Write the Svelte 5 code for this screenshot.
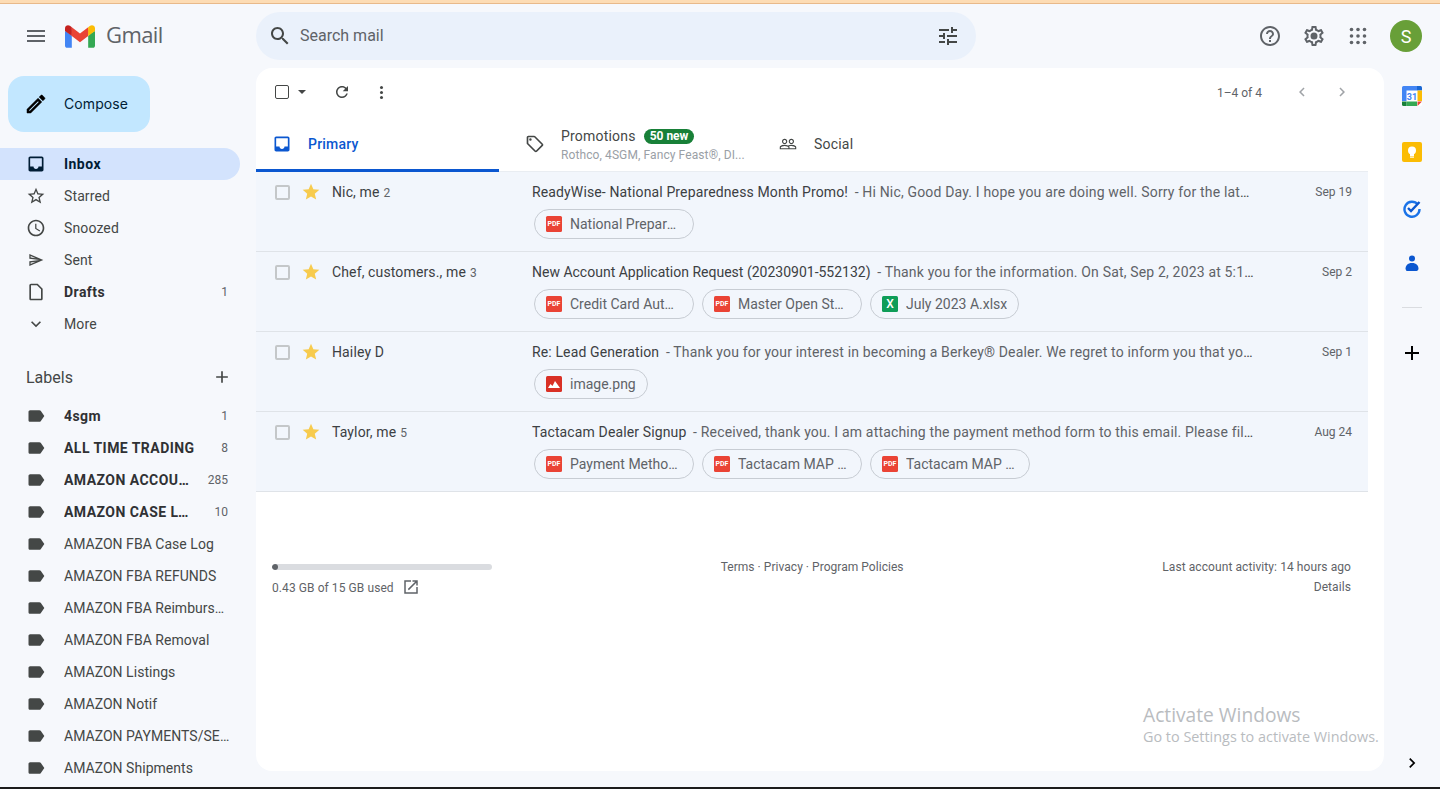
<script>
  // Gmail inbox. Icons are material paths, keyed by name.
  const icons = {
    menu: 'M3 18h18v-2H3v2zm0-5h18v-2H3v2zm0-7v2h18V6H3z',
    search: 'M15.5 14h-.79l-.28-.27C15.41 12.59 16 11.11 16 9.5 16 5.91 13.09 3 9.5 3S3 5.91 3 9.5 5.91 16 9.5 16c1.61 0 3.09-.59 4.23-1.57l.27.28v.79l5 4.99L20.49 19l-4.99-5zm-6 0C7.01 14 5 11.99 5 9.5S7.01 5 9.5 5 14 7.01 14 9.5 11.99 14 9.5 14z',
    tune: 'M3 17v2h6v-2H3zM3 5v2h10V5H3zm10 16v-2h8v-2h-8v-2h-2v6h2zM7 9v2H3v2h4v2h2V9H7zm14 4v-2H11v2h10zm-6-4h2V7h4V5h-4V3h-2v6z',
    help: 'M11 18h2v-2h-2v2zm1-16C6.48 2 2 6.48 2 12s4.48 10 10 10 10-4.48 10-10S17.52 2 12 2zm0 18c-4.41 0-8-3.59-8-8s3.59-8 8-8 8 3.59 8 8-3.59 8-8 8zm0-14c-2.21 0-4 1.79-4 4h2c0-1.1.9-2 2-2s2 .9 2 2c0 2-3 1.75-3 5h2c0-2.25 3-2.5 3-5 0-2.21-1.79-4-4-4z',
    gear: 'M19.43 12.98c.04-.32.07-.64.07-.98 0-.34-.03-.66-.07-.98l2.11-1.65c.19-.15.24-.42.12-.64l-2-3.46c-.09-.16-.26-.25-.44-.25-.06 0-.12.01-.17.03l-2.49 1c-.52-.4-1.08-.73-1.69-.98l-.38-2.65C14.46 2.18 14.25 2 14 2h-4c-.25 0-.46.18-.49.42l-.38 2.65c-.61.25-1.17.59-1.69.98l-2.49-1c-.06-.02-.12-.03-.18-.03-.17 0-.34.09-.43.25l-2 3.46c-.13.22-.07.49.12.64l2.11 1.65c-.04.32-.07.65-.07.98 0 .33.03.66.07.98l-2.11 1.65c-.19.15-.24.42-.12.64l2 3.46c.09.16.26.25.44.25.06 0 .12-.01.17-.03l2.49-1c.52.4 1.08.73 1.69.98l.38 2.65c.03.24.24.42.49.42h4c.25 0 .46-.18.49-.42l.38-2.65c.61-.25 1.17-.59 1.69-.98l2.49 1c.06.02.12.03.18.03.17 0 .34-.09.43-.25l2-3.46c.12-.22.07-.49-.12-.64l-2.11-1.65zm-1.98-1.71c.04.31.05.52.05.73 0 .21-.02.43-.05.73l-.14 1.13.89.7 1.08.84-.7 1.21-1.27-.51-1.04-.42-.9.68c-.43.32-.84.56-1.25.73l-1.06.43-.16 1.13-.2 1.35h-1.4l-.19-1.35-.16-1.13-1.06-.43c-.43-.18-.83-.41-1.23-.71l-.91-.7-1.06.43-1.27.51-.7-1.21 1.08-.84.89-.7-.14-1.13c-.03-.31-.05-.54-.05-.74s.02-.43.05-.73l.14-1.13-.89-.7-1.08-.84.7-1.21 1.27.51 1.04.42.9-.68c.43-.32.84-.56 1.25-.73l1.06-.43.16-1.13.2-1.35h1.39l.19 1.35.16 1.13 1.06.43c.43.18.83.41 1.23.71l.91.7 1.06-.43 1.27-.51.7 1.21-1.07.85-.89.7.14 1.13zM12 8.500a3.500 3.500 0 1 0 0 7 3.500 3.500 0 0 0 0-7z',
    edit: 'M14.06 9.02l.92.92L5.92 19H5v-.92l9.06-9.06M17.66 3c-.25 0-.51.1-.7.29l-1.83 1.83 3.75 3.75 1.83-1.83c.39-.39.39-1.02 0-1.41l-2.34-2.34c-.2-.2-.45-.29-.71-.29zm-3.6 3.19L3 17.25V21h3.75L17.81 9.94l-3.75-3.75z',
    inbox: 'M19 3H4.99c-1.11 0-1.98.89-1.98 2L3 19c0 1.1.88 2 1.99 2H19c1.1 0 2-.9 2-2V5c0-1.11-.9-2-2-2zm0 12h-4c0 1.66-1.35 3-3 3s-3-1.34-3-3H4.99V5H19v10z',
    star: 'M22 9.24l-7.19-.62L12 2 9.19 8.63 2 9.24l5.46 4.73L5.82 21 12 17.27 18.18 21l-1.63-7.03L22 9.24zM12 15.4l-3.76 2.27 1-4.28-3.32-2.88 4.38-.38L12 6.1l1.71 4.04 4.38.38-3.32 2.88 1 4.28L12 15.4z',
    starFill: 'M12 17.27L18.18 21l-1.64-7.03L22 9.24l-7.19-.61L12 2 9.19 8.63 2 9.24l5.46 4.73L5.82 21z',
    clock: 'M11.99 2C6.47 2 2 6.48 2 12s4.47 10 9.99 10C17.52 22 22 17.52 22 12S17.52 2 11.99 2zM12 20c-4.42 0-8-3.58-8-8s3.58-8 8-8 8 3.58 8 8-3.58 8-8 8zm.5-13H11v6l5.25 3.15.75-1.23-4.5-2.67z',
    send: 'M4.01 6.03l7.51 3.22-7.52-1 .01-2.22m7.5 8.72L4 17.97v-2.22l7.51-1M2.01 3L2 10l15 2-15 2 .01 7L23 12 2.01 3z',
    draft: 'M14 2H6c-1.1 0-2 .9-2 2v16c0 1.1.9 2 2 2h12c1.1 0 2-.9 2-2V8l-6-6zM6 20V4h7.17L18 8.83V20H6z',
    down: 'M7.41 8.59L12 13.17l4.59-4.58L18 10l-6 6-6-6z',
    label: 'M17.63 5.84C17.27 5.33 16.67 5 16 5L5 5.01C3.9 5.01 3 5.9 3 7v10c0 1.1.9 1.99 2 1.99L16 19c.67 0 1.27-.33 1.63-.84L22 12l-4.37-6.16z',
    plus: 'M19 13h-6v6h-2v-6H5v-2h6V5h2v6h6v2z',
    refresh: 'M17.65 6.35C16.2 4.9 14.21 4 12 4c-4.42 0-7.99 3.58-7.99 8s3.57 8 7.99 8c3.73 0 6.84-2.55 7.73-6h-2.08c-.82 2.33-3.04 4-5.65 4-3.31 0-6-2.69-6-6s2.69-6 6-6c1.66 0 3.14.69 4.22 1.78L13 11h7V4l-2.35 2.35z',
    tag: 'M21.41 11.58l-9-9C12.05 2.22 11.55 2 11 2H4c-1.1 0-2 .9-2 2v7c0 .55.22 1.05.59 1.42l9 9c.36.36.86.58 1.41.58s1.05-.22 1.41-.59l7-7c.37-.36.59-.86.59-1.41s-.23-1.06-.59-1.42zM13 20.01L4 11V4h7v-.01l9 9-7 7.02zM6.500 5a1.500 1.500 0 1 0 0 3 1.500 1.500 0 0 0 0-3z',
    people: 'M16.5 13c-1.2 0-3.07.34-4.5 1-1.43-.67-3.3-1-4.5-1C5.33 13 1 14.08 1 16.25V19h22v-2.75c0-2.17-4.33-3.25-6.5-3.25zm-4 4.5h-10v-1.25c0-.54 2.56-1.75 5-1.75s5 1.21 5 1.75v1.25zm9 0H14v-1.25c0-.46-.2-.86-.52-1.22.88-.3 1.96-.53 3.02-.53 2.44 0 5 1.21 5 1.75v1.25zM7.5 12c1.93 0 3.5-1.57 3.5-3.5S9.43 5 7.5 5 4 6.57 4 8.5 5.57 12 7.5 12zm0-5.5c1.1 0 2 .9 2 2s-.9 2-2 2-2-.9-2-2 .9-2 2-2zm9 5.5c1.93 0 3.5-1.57 3.5-3.5S18.43 5 16.5 5 13 6.57 13 8.5s1.57 3.5 3.5 3.5zm0-5.5c1.1 0 2 .9 2 2s-.9 2-2 2-2-.9-2-2 .9-2 2-2z',
    left: 'M15.41 7.41L14 6l-6 6 6 6 1.41-1.41L10.83 12z',
    right: 'M10 6L8.59 7.41 13.17 12l-4.58 4.59L10 18l6-6z',
    open: 'M19 19H5V5h7V3H3v18h18v-9h-2v7zM14 3v2h3.59l-9.83 9.83 1.41 1.41L19 6.41V10h2V3h-7z',
  };

  const nav = [
    { icon: 'inbox', name: 'Inbox', active: true },
    { icon: 'star', name: 'Starred' },
    { icon: 'clock', name: 'Snoozed' },
    { icon: 'send', name: 'Sent', size: 16 },
    { icon: 'draft', name: 'Drafts', bold: true, count: '1' },
    { icon: 'down', name: 'More' },
  ];

  const labels = [
    { name: '4sgm', bold: true, count: '1' },
    { name: 'ALL TIME TRADING', bold: true, count: '8' },
    { name: 'AMAZON ACCOUNT HEALTH', bold: true, count: '285' },
    { name: 'AMAZON CASE LOGS 2023', bold: true, count: '10' },
    { name: 'AMAZON FBA Case Log' },
    { name: 'AMAZON FBA REFUNDS' },
    { name: 'AMAZON FBA Reimbursements' },
    { name: 'AMAZON FBA Removal' },
    { name: 'AMAZON Listings' },
    { name: 'AMAZON Notif' },
    { name: 'AMAZON PAYMENTS/SETTLEMENTS' },
    { name: 'AMAZON Shipments' },
  ];

  const mails = [
    {
      from: 'Nic, me', n: '2', date: 'Sep 19',
      subject: 'ReadyWise- National Preparedness Month Promo!',
      snippet: 'Hi Nic, Good Day. I hope you are doing well. Sorry for the late reply, we have been very busy this month',
      files: [{ kind: 'pdf', name: 'National Preparedness.pdf' }],
    },
    {
      from: 'Chef, customers., me', n: '3', date: 'Sep 2', digits: true,
      subject: 'New Account Application Request (20230901-552132)',
      snippet: 'Thank you for the information. On Sat, Sep 2, 2023 at 5:16 AM customers wrote to us about this',
      files: [
        { kind: 'pdf', name: 'Credit Card Authorization.pdf' },
        { kind: 'pdf', name: 'Master Open Stock List.pdf' },
        { kind: 'xls', name: 'July 2023 A.xlsx', auto: true },
      ],
    },
    {
      from: 'Hailey D', date: 'Sep 1',
      subject: 'Re: Lead Generation',
      snippet: 'Thank you for your interest in becoming a Berkey® Dealer. We regret to inform you that your application was declined',
      files: [{ kind: 'img', name: 'image.png', auto: true }],
    },
    {
      from: 'Taylor, me', n: '5', date: 'Aug 24',
      subject: 'Tactacam Dealer Signup',
      snippet: 'Received, thank you. I am attaching the payment method form to this email. Please fill it out and return',
      files: [
        { kind: 'pdf', name: 'Payment Method Form.pdf' },
        { kind: 'pdf', name: 'Tactacam MAP Policy.pdf' },
        { kind: 'pdf', name: 'Tactacam MAP Pricing.pdf' },
      ],
    },
  ];
</script>

{#snippet icon(name, size = 20)}
  <svg class="icon" width={size} height={size} viewBox="0 0 24 24" aria-hidden="true"><path d={icons[name]} fill-rule="evenodd" /></svg>
{/snippet}

<div class="page">
  <div class="topstrip"></div>

  <header>
    <div class="brand">
      <span class="burger">{@render icon('menu', 24)}</span>
      <svg class="logo" width="30" height="23" viewBox="0 0 256 193" aria-hidden="true">
        <path fill="#4285F4" d="M58.182 192.05V93.14L27.507 65.077 0 49.504v125.091c0 9.658 7.825 17.455 17.455 17.455h40.727Z" />
        <path fill="#34A853" d="M197.818 192.05h40.727c9.659 0 17.455-7.826 17.455-17.455V49.505l-31.156 17.837-27.026 25.798v98.91Z" />
        <path fill="#EA4335" d="m58.182 93.14-4.174-38.647 4.174-36.989L128 69.868l69.818-52.364 4.669 34.992-4.669 40.644L128 145.504z" />
        <path fill="#FBBC04" d="M197.818 17.504V93.14L256 49.504V26.231c0-21.585-24.64-33.89-41.89-20.945l-16.292 12.218Z" />
        <path fill="#C5221F" d="m0 49.504 26.759 20.07L58.182 93.14V17.504L41.89 5.286C24.61-7.66 0 4.646 0 26.23v23.273Z" />
      </svg>
      <span class="wordmark">Gmail</span>
    </div>
    <div class="search">
      {@render icon('search', 24)}
      <span class="placeholder">Search mail</span>
      {@render icon('tune', 24)}
    </div>
    <div class="actions">
      <span class="action">{@render icon('help', 24)}</span>
      <span class="action">{@render icon('gear', 24)}</span>
      <span class="action">
        <svg class="icon" width="24" height="24" viewBox="0 0 24 24" aria-hidden="true" fill="#5f6368">
          {#each [5.5, 12, 18.5] as cy}
            {#each [5.5, 12, 18.5] as cx}
              <circle {cx} {cy} r="1.8" />
            {/each}
          {/each}
        </svg>
      </span>
      <span class="avatar">S</span>
    </div>
  </header>

  <div class="body">
    <aside class="side">
      <button class="compose">{@render icon('edit', 24)}<span>Compose</span></button>
      <nav>
        {#each nav as item}
          <div class="navrow" class:active={item.active} class:bold={item.bold || item.active}>
            <span class="navicon">{@render icon(item.icon, item.size ?? 20)}</span>
            <span class="navname">{item.name}</span>
            {#if item.count}<span class="count">{item.count}</span>{/if}
          </div>
        {/each}
      </nav>
      <div class="labelhead">
        <span>Labels</span>
        {@render icon('plus', 20)}
      </div>
      <div class="labels">
        {#each labels as item}
          <div class="navrow" class:bold={item.bold}>
            <span class="navicon">{@render icon('label', 20)}</span>
            <span class="navname">{item.name}</span>
            {#if item.count}<span class="count">{item.count}</span>{/if}
          </div>
        {/each}
      </div>
    </aside>

    <main>
      <div class="toolbar">
        <span class="selectbox"></span>
        <span class="caret"></span>
        <span class="tool refresh">{@render icon('refresh', 18)}</span>
        <span class="tool dots"><i></i><i></i><i></i></span>
        <span class="paging">1–4 of 4</span>
        <span class="pagebtn">{@render icon('left', 18)}</span>
        <span class="pagebtn">{@render icon('right', 18)}</span>
      </div>

      <div class="tabs">
        <div class="tab primary">
          {@render icon('inbox', 20)}
          <span>Primary</span>
        </div>
        <div class="tab promos">
          {@render icon('tag', 20)}
          <div class="promotext">
            <div class="promotop"><span>Promotions</span><b class="badge">50 new</b></div>
            <div class="promosub">Rothco, 4SGM, Fancy Feast®, DI...</div>
          </div>
        </div>
        <div class="tab social">
          {@render icon('people', 18)}
          <span>Social</span>
        </div>
      </div>

      <div class="list">
        {#each mails as mail}
          <div class="mail">
            <div class="line">
              <span class="check"></span>
              <span class="star">{@render icon('starFill', 20)}</span>
              <span class="from">{mail.from}{#if mail.n}<small>{mail.n}</small>{/if}</span>
              <span class="text"><span class="subject" class:digits={mail.digits}>{mail.subject}</span><span class="snippet">{' - '}{mail.snippet}</span></span>
              <span class="date">{mail.date}</span>
            </div>
            <div class="chips">
              {#each mail.files as file}
                <span class="chip" class:auto={file.auto}>
                  {#if file.kind === 'pdf'}
                    <span class="ficon pdf">PDF</span>
                  {:else if file.kind === 'xls'}
                    <span class="ficon xls">X</span>
                  {:else}
                    <span class="ficon img">
                      <svg width="12" height="7" viewBox="0 0 12 7" aria-hidden="true"><path fill="#fff" d="M0 7l2.5-4 2 2L7 0l5 7z" /></svg>
                    </span>
                  {/if}
                  <span class="fname">{file.name}</span>
                </span>
              {/each}
            </div>
          </div>
        {/each}
      </div>

      <footer>
        <div class="storage">
          <div class="bar"><div class="fill" style="width: {(0.43 / 15) * 100}%"></div></div>
          <div class="used"><span>0.43 GB of 15 GB used</span>{@render icon('open', 18)}</div>
        </div>
        <div class="terms">Terms · Privacy · Program Policies</div>
        <div class="activity">
          <div>Last account activity: 14 hours ago</div>
          <div class="details">Details</div>
        </div>
      </footer>
    </main>

    <aside class="rail">
      <div class="railapps">
        <svg width="20" height="20" viewBox="0 0 20 20" aria-hidden="true">
          <rect width="20" height="20" rx="1.5" fill="#fff" />
          <path fill="#4285f4" d="M1.5 0H15v4.5H4.5V15H0V1.5A1.5 1.5 0 0 1 1.5 0z" />
          <path fill="#1967d2" d="M15 0h3.5A1.5 1.5 0 0 1 20 1.5V4.5h-5z" />
          <path fill="#fbbc04" d="M15.5 4.5H20V15h-4.5z" />
          <path fill="#34a853" d="M4.5 15.5H15V20H4.5z" />
          <path fill="#188038" d="M0 15.5h4.5V20H1.5A1.5 1.5 0 0 1 0 18.500z" />
          <path fill="#ea4335" d="M15.500 15.500H20L15.500 20z" />
          <text x="10" y="13.500" text-anchor="middle" font-size="9" font-weight="700" fill="#4285f4" font-family="Roboto, sans-serif">31</text>
        </svg>
        <svg width="20" height="20" viewBox="0 0 20 20" aria-hidden="true">
          <rect width="20" height="20" rx="2" fill="#fbbc04" />
          <circle cx="10" cy="8.500" r="4" fill="#fff" />
          <rect x="8" y="11.500" width="4" height="2.500" fill="#fff" />
          <rect x="8" y="14.500" width="4" height="1.200" fill="#fff" />
        </svg>
        <svg width="20" height="20" viewBox="0 0 20 20" aria-hidden="true">
          <path fill="none" stroke="#1a73e8" stroke-width="2.400" d="M15.800 6.500A7.500 7.500 0 1 0 17.500 11" />
          <path fill="none" stroke="#0b57d0" stroke-width="2.400" d="M6 10l3 3 8.500-9" />
        </svg>
        <svg width="20" height="20" viewBox="0 0 20 20" aria-hidden="true">
          <circle cx="10" cy="4.500" r="3" fill="#0b57d0" />
          <path fill="#0b57d0" d="M3.500 15.500c0-4 2-6.500 6.500-6.500s6.500 2.500 6.500 5.500c0 1.500-1 2.500-2 2.500h-9.500c-.7 0-1-.7-1-1.500z" />
        </svg>
      </div>
      <div class="raildiv"></div>
      <span class="railplus">{@render icon('plus', 24)}</span>
      <span class="railchev">{@render icon('right', 20)}</span>
    </aside>
  </div>

  <div class="bottomstrip"></div>

  <div class="watermark">
    <div class="wm1">Activate Windows</div>
    <div class="wm2">Go to Settings to activate Windows.</div>
  </div>
</div>

<style>
  :global(body) {
    margin: 0;
    overflow: hidden;
  }
  .page {
    position: relative;
    display: flex;
    flex-direction: column;
    height: 789px;
    overflow: hidden;
    background: #f6f8fc;
    font-family: Roboto, "Liberation Sans", sans-serif;
    color: #444746;
  }
  .icon {
    display: block;
    fill: currentColor;
    flex: none;
  }
  .topstrip {
    flex: none;
    height: 3px;
    background: #fddcb4;
    border-bottom: 1px solid #e8b98a;
  }
  .bottomstrip {
    flex: none;
    height: 2px;
    background: #1c1c1c;
  }

  header {
    flex: none;
    display: flex;
    align-items: center;
    height: 64px;
  }
  .brand {
    width: 256px;
    display: flex;
    align-items: center;
    flex: none;
  }
  .burger {
    margin-left: 24px;
    color: #5f6368;
  }
  .logo {
    margin-left: 17px;
  }
  .wordmark {
    margin: -4px 0 0 11px;
    font-family: "Open Sans", sans-serif;
    font-size: 22px;
    letter-spacing: -0.6px;
    color: #5f6368;
  }
  .search {
    width: 720px;
    height: 48px;
    border-radius: 24px;
    background: #eaf1fb;
    display: flex;
    align-items: center;
    padding: 0 16px 0 12px;
    box-sizing: border-box;
    color: #444746;
  }
  .placeholder {
    flex: 1;
    margin: -2px 0 0 8px;
    font-size: 16px;
    color: #5f6368;
  }
  .actions {
    margin-left: auto;
    display: flex;
    align-items: center;
    padding-right: 18px;
    color: #5f6368;
  }
  .action {
    margin-right: 20px;
  }
  .avatar {
    width: 32px;
    height: 32px;
    margin-left: 0;
    border-radius: 50%;
    background: #689f38;
    color: #fff;
    font-size: 18px;
    display: flex;
    align-items: center;
    justify-content: center;
  }

  .body {
    flex: 1;
    min-height: 0;
    display: flex;
  }
  .side {
    width: 256px;
    flex: none;
    overflow: hidden;
  }
  .compose {
    display: flex;
    align-items: center;
    width: 142px;
    height: 56px;
    margin: 8px 0 16px 8px;
    padding: 0 0 0 16px;
    border: none;
    border-radius: 16px;
    background: #c2e7ff;
    color: #001d35;
    font: 14px "Inter", Roboto, sans-serif;
  }
  .compose .icon {
    color: #000;
    stroke: #000;
    stroke-width: 0.5;
  }
  .compose span {
    margin: -1px 0 0 16px;
    letter-spacing: 0.1px;
  }
  .navrow {
    display: flex;
    align-items: center;
    width: 240px;
    height: 32px;
    box-sizing: border-box;
    padding: 0 12px 0 26px;
    font-size: 14px;
    letter-spacing: 0.12px;
    color: #444746;
    border-radius: 0 16px 16px 0;
  }
  .labels .navrow {
    letter-spacing: 0.03px;
  }
  .navrow.active {
    background: #d3e3fd;
    color: #001d35;
  }
  .navrow.bold,
  .labels .navrow.bold {
    font-weight: 700;
    letter-spacing: 0.45px;
  }
  .navrow.bold:not(.active) {
    color: #303134;
  }
  .navicon {
    width: 20px;
    margin-right: 18px;
    flex: none;
    display: flex;
    justify-content: center;
    color: #444746;
  }
  .navrow.active .navicon {
    color: #001d35;
  }
  .navname {
    flex: 1;
    min-width: 0;
    margin-right: -2px;
    white-space: nowrap;
    overflow: hidden;
    text-overflow: ellipsis;
  }
  .count {
    font-size: 12px;
    font-weight: 400;
    letter-spacing: 0;
    color: #5f6368;
    margin-left: 20px;
  }
  .labelhead {
    display: flex;
    align-items: center;
    justify-content: space-between;
    width: 240px;
    box-sizing: border-box;
    padding: 0 8px 0 26px;
    height: 32px;
    margin: 21px 0 7px;
    font-size: 16px;
    color: #444746;
  }

  main {
    width: 1128px;
    flex: none;
    height: 703px;
    background: #fff;
    border-radius: 16px;
    overflow: hidden;
    box-sizing: border-box;
    padding-right: 16px;
  }
  .toolbar {
    display: flex;
    align-items: center;
    height: 48px;
    color: #444746;
    padding-left: 19px;
  }
  .selectbox {
    width: 12px;
    height: 12px;
    border: 1.5px solid #444746;
    border-radius: 2px;
  }
  .caret {
    margin-left: 9px;
    border: 4px solid transparent;
    border-top: 4.500px solid #444746;
    border-bottom: 0;
  }
  .refresh {
    margin-left: 27px;
  }
  .dots {
    margin-left: 21px;
    display: flex;
    flex-direction: column;
    gap: 2px;
    width: 18px;
    align-items: center;
  }
  .dots i {
    width: 3px;
    height: 3px;
    border-radius: 50%;
    background: #444746;
  }
  .paging {
    margin: 1px 31px 0 auto;
    font-size: 12px;
    color: #5f6368;
  }
  .pagebtn {
    color: #a0a3a7;
    margin-right: 22px;
  }
  .pagebtn:last-child {
    margin-right: 17px;
  }

  .tabs {
    display: flex;
    height: 56px;
    box-sizing: border-box;
    border-bottom: 1px solid #e9edf2;
  }
  .tab {
    display: flex;
    align-items: center;
    font-size: 14px;
    letter-spacing: 0.2px;
    color: #444746;
  }
  .primary {
    width: 243px;
    height: 56px;
    padding: 3px 0 0 16px;
    box-sizing: border-box;
    color: #0b57d0;
    font-weight: 500;
    border-bottom: 3px solid #0b57d0;
  }
  .primary span {
    margin-left: 16px;
  }
  .promos {
    width: 279px;
    padding-left: 26px;
    box-sizing: border-box;
  }
  .promotext {
    margin: 3px 0 0 16px;
  }
  .promotop {
    display: flex;
    align-items: center;
    gap: 8px;
    line-height: 16px;
  }
  .badge {
    background: #188038;
    color: #fff;
    font-size: 12px;
    font-weight: 700;
    line-height: 15px;
    padding: 0 6px;
    letter-spacing: 0;
    border-radius: 8px;
  }
  .promosub {
    font-size: 12px;
    letter-spacing: 0.1px;
    color: #9aa0a6;
    margin-top: 4px;
    line-height: 14px;
  }
  .social {
    padding-left: 1px;
  }
  .social span {
    margin-left: 17px;
  }

  .list {
    background: #f2f6fc;
  }
  .mail {
    height: 80px;
    box-sizing: border-box;
    border-bottom: 1px solid #dfe3e8;
  }
  .line {
    display: flex;
    align-items: center;
    height: 40px;
    font-size: 14px;
    letter-spacing: 0.13px;
    padding-left: 19px;
    padding-right: 16px;
  }
  .check {
    width: 11px;
    height: 11px;
    flex: none;
    border: 2px solid #c4c7c9;
    border-radius: 2px;
  }
  .star {
    margin-left: 11px;
    color: #f7cb4d;
    flex: none;
  }
  .from {
    width: 200px;
    margin-left: 11px;
    flex: none;
    color: #3c4043;
  }
  .from small {
    font-size: 12px;
    margin-left: 4px;
    color: #5f6368;
  }
  .text {
    flex: 1;
    min-width: 0;
    white-space: nowrap;
    overflow: hidden;
    text-overflow: ellipsis;
  }
  .subject {
    color: #3c4043;
    margin-right: 3px;
  }
  .subject.digits {
    letter-spacing: 0;
  }
  .snippet {
    color: #5f6368;
    letter-spacing: 0.17px;
    white-space: pre;
  }
  .date {
    width: 97px;
    flex: none;
    text-align: right;
    font-size: 12px;
    letter-spacing: 0;
    color: #5f6368;
  }
  .chips {
    display: flex;
    gap: 8px;
    margin-top: -3px;
    padding-left: 278px;
  }
  .chip {
    display: flex;
    align-items: center;
    box-sizing: border-box;
    width: 160px;
    height: 30px;
    padding: 0 13px 0 11px;
    border: 1px solid #c7ccd3;
    border-radius: 15px;
    font-size: 14px;
    color: #5f6368;
  }
  .chip.auto {
    width: auto;
    padding-right: 11px;
  }
  .ficon {
    width: 16px;
    height: 16px;
    flex: none;
    border-radius: 1.500px;
    color: #fff;
    display: flex;
    align-items: center;
    justify-content: center;
    font-weight: 700;
  }
  .pdf {
    background: #ea4335;
    font-size: 7px;
  }
  .xls {
    background: #0f9d58;
    font-size: 12px;
    font-weight: 500;
  }
  .img {
    background: #d93025;
  }
  .fname {
    margin-left: 8px;
    min-width: 0;
    white-space: nowrap;
    overflow: hidden;
    text-overflow: ellipsis;
  }

  footer {
    display: flex;
    justify-content: space-between;
    padding: 72px 17px 0 16px;
    font-size: 12px;
    letter-spacing: 0.08px;
    color: #5f6368;
  }
  .storage {
    width: 220px;
  }
  .bar {
    height: 6px;
    border-radius: 3px;
    background: #dadce0;
    overflow: hidden;
  }
  .fill {
    height: 100%;
    background: #5f6368;
    border-radius: 3px;
  }
  .used {
    display: flex;
    align-items: center;
    gap: 8px;
    margin-top: 10px;
  }
  .used .icon {
    margin-top: -2px;
  }
  .terms {
    margin: -4px 30px 0 0;
    letter-spacing: 0.04px;
  }
  .activity {
    text-align: right;
    line-height: 20px;
    margin-top: -7px;
  }

  .rail {
    position: relative;
    flex: 1;
    display: flex;
    flex-direction: column;
    align-items: center;
    padding-top: 18px;
    color: #000;
    width: 56px;
  }
  .railapps {
    display: flex;
    flex-direction: column;
    gap: 36px;
    align-items: center;
  }
  .raildiv {
    width: 20px;
    height: 1px;
    background: #dadce0;
    margin-top: 33px;
  }
  .railplus {
    margin-top: 33px;
  }
  .railchev {
    margin-top: auto;
    margin-bottom: 14px;
  }

  .watermark {
    position: absolute;
    left: 1143px;
    top: 703px;
    color: #b9bcbf;
    font-family: "Open Sans", sans-serif;
  }
  .wm1 {
    font-size: 19.200px;
    line-height: 24px;
  }
  .wm2 {
    font-size: 14.400px;
    line-height: 20px;
  }
</style>
